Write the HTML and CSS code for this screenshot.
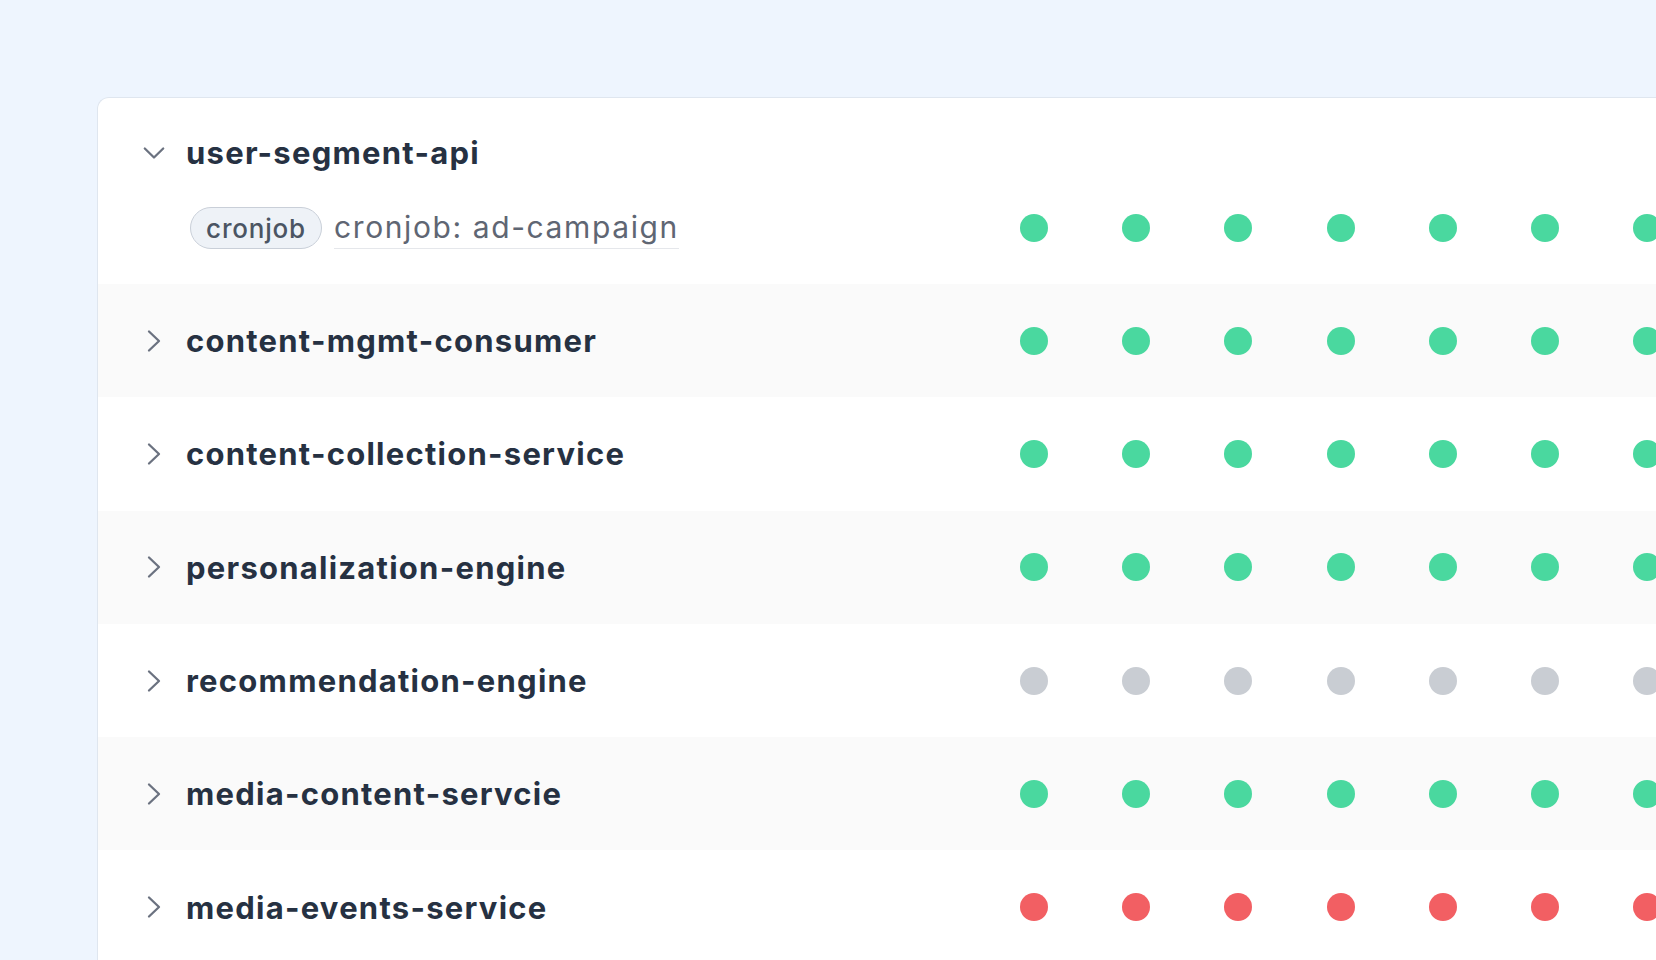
FILE: index.html
```html
<!DOCTYPE html>
<html lang="en">
<head>
<meta charset="utf-8">
<title>Services</title>
<link rel="stylesheet" href="styles.css">
</head>
<body>
<div class="card">
  <div class="row row-open">
    <div class="row-head">
      <span class="chev"><svg viewBox="0 0 24 24" width="24" height="24"><polyline points="2.8,7.5 12,16.5 21.2,7.5" fill="none" stroke="#6b7280" stroke-width="2.3" stroke-linecap="round" stroke-linejoin="round"/></svg></span>
      <span class="name">user-segment-api</span>
    </div>
    <div class="row-sub">
      <div class="sub-label">
        <span class="badge">cronjob</span>
        <span class="job">cronjob: ad-campaign</span>
      </div>
      <div class="dots">
        <span class="dot ok"></span><span class="dot ok"></span><span class="dot ok"></span><span class="dot ok"></span><span class="dot ok"></span><span class="dot ok"></span><span class="dot ok"></span><span class="dot ok"></span>
      </div>
    </div>
  </div>

  <div class="row alt">
    <div class="label"><span class="chev"><svg viewBox="0 0 24 24" width="24" height="24"><polyline points="7,2.5 17,12 7,21.5" fill="none" stroke="#6b7280" stroke-width="2.3" stroke-linecap="round" stroke-linejoin="round"/></svg></span><span class="name">content-mgmt-consumer</span></div>
    <div class="dots"><span class="dot ok"></span><span class="dot ok"></span><span class="dot ok"></span><span class="dot ok"></span><span class="dot ok"></span><span class="dot ok"></span><span class="dot ok"></span><span class="dot ok"></span></div>
  </div>

  <div class="row">
    <div class="label"><span class="chev"><svg viewBox="0 0 24 24" width="24" height="24"><polyline points="7,2.5 17,12 7,21.5" fill="none" stroke="#6b7280" stroke-width="2.3" stroke-linecap="round" stroke-linejoin="round"/></svg></span><span class="name">content-collection-service</span></div>
    <div class="dots"><span class="dot ok"></span><span class="dot ok"></span><span class="dot ok"></span><span class="dot ok"></span><span class="dot ok"></span><span class="dot ok"></span><span class="dot ok"></span><span class="dot ok"></span></div>
  </div>

  <div class="row alt">
    <div class="label"><span class="chev"><svg viewBox="0 0 24 24" width="24" height="24"><polyline points="7,2.5 17,12 7,21.5" fill="none" stroke="#6b7280" stroke-width="2.3" stroke-linecap="round" stroke-linejoin="round"/></svg></span><span class="name">personalization-engine</span></div>
    <div class="dots"><span class="dot ok"></span><span class="dot ok"></span><span class="dot ok"></span><span class="dot ok"></span><span class="dot ok"></span><span class="dot ok"></span><span class="dot ok"></span><span class="dot ok"></span></div>
  </div>

  <div class="row">
    <div class="label"><span class="chev"><svg viewBox="0 0 24 24" width="24" height="24"><polyline points="7,2.5 17,12 7,21.5" fill="none" stroke="#6b7280" stroke-width="2.3" stroke-linecap="round" stroke-linejoin="round"/></svg></span><span class="name">recommendation-engine</span></div>
    <div class="dots"><span class="dot off"></span><span class="dot off"></span><span class="dot off"></span><span class="dot off"></span><span class="dot off"></span><span class="dot off"></span><span class="dot off"></span><span class="dot off"></span></div>
  </div>

  <div class="row alt">
    <div class="label"><span class="chev"><svg viewBox="0 0 24 24" width="24" height="24"><polyline points="7,2.5 17,12 7,21.5" fill="none" stroke="#6b7280" stroke-width="2.3" stroke-linecap="round" stroke-linejoin="round"/></svg></span><span class="name">media-content-servcie</span></div>
    <div class="dots"><span class="dot ok"></span><span class="dot ok"></span><span class="dot ok"></span><span class="dot ok"></span><span class="dot ok"></span><span class="dot ok"></span><span class="dot ok"></span><span class="dot ok"></span></div>
  </div>

  <div class="row">
    <div class="label"><span class="chev"><svg viewBox="0 0 24 24" width="24" height="24"><polyline points="7,2.5 17,12 7,21.5" fill="none" stroke="#6b7280" stroke-width="2.3" stroke-linecap="round" stroke-linejoin="round"/></svg></span><span class="name">media-events-service</span></div>
    <div class="dots"><span class="dot bad"></span><span class="dot bad"></span><span class="dot bad"></span><span class="dot bad"></span><span class="dot bad"></span><span class="dot bad"></span><span class="dot bad"></span><span class="dot bad"></span></div>
  </div>
</div>
</body>
</html>
```

FILE: styles.css
```css
html, body {
  margin: 0;
  padding: 0;
  height: 100%;
  overflow: hidden;
}

body {
  background: #eef5fe;
  font-family: Inter, "Noto Sans", sans-serif;
  padding: 97px 0 0 97px;
  box-sizing: border-box;
}

.card {
  width: 1700px;
  background: #ffffff;
  border: 1px solid #dfe6ef;
  border-right: none;
  border-bottom: none;
  border-radius: 12px 0 0 0;
  overflow: hidden;
}

.row {
  display: grid;
  grid-template-columns: 878px 1fr;
  align-items: center;
  height: 113.3px;
  padding-left: 44px;
  box-sizing: border-box;
}

.row.alt {
  background: #fafafa;
}

.row-open {
  display: flex;
  flex-direction: column;
  align-items: stretch;
  height: 186px;
  padding-top: 34px;
}

.row-head {
  display: flex;
  align-items: center;
  height: 41px;
}

.row-sub {
  display: grid;
  grid-template-columns: 878px 1fr;
  align-items: center;
  height: 42px;
  margin-top: 34px;
}

.sub-label {
  display: flex;
  align-items: center;
  padding-left: 48px;
}

.label {
  display: flex;
  align-items: center;
}

.chev {
  display: flex;
  width: 24px;
  height: 24px;
  flex: none;
}

.name {
  margin-left: 20px;
  font-size: 31px;
  font-weight: 700;
  color: #263142;
  letter-spacing: 1.25px;
  white-space: nowrap;
}

.badge {
  display: inline-flex;
  align-items: center;
  justify-content: center;
  box-sizing: border-box;
  width: 132px;
  height: 42px;
  border: 1.6px solid #c9cfd8;
  border-radius: 21px;
  background: #eef2f7;
  color: #4b5563;
  font-size: 26px;
  font-weight: 500;
  letter-spacing: 0.8px;
}

.job {
  margin-left: 12px;
  font-size: 30px;
  font-weight: 400;
  color: #5f6673;
  letter-spacing: 1.6px;
  padding-bottom: 2px;
  border-bottom: 1.5px solid #e5e7eb;
  line-height: 38px;
  white-space: nowrap;
}

.dots {
  display: flex;
  align-items: center;
  gap: 74.2px;
}

.dot {
  width: 28px;
  height: 28px;
  border-radius: 50%;
  flex: none;
}

.dot.ok { background: #4ad89f; }
.dot.off { background: #c9cdd3; }
.dot.bad { background: #f25f63; }
```
